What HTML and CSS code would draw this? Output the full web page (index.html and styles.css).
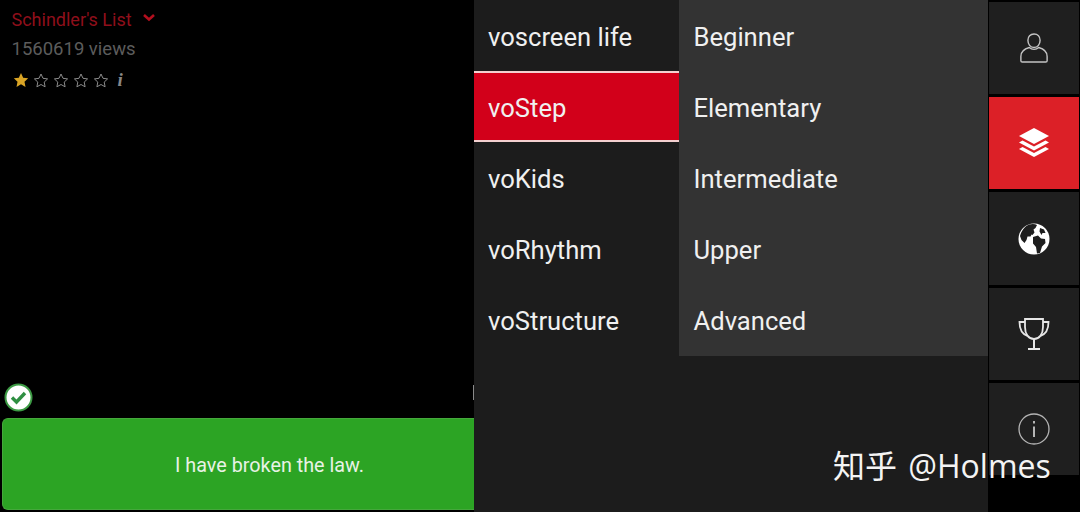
FILE: index.html
```html
<!DOCTYPE html>
<html lang="en">
<head>
<meta charset="UTF-8">
<meta name="viewport" content="width=device-width, initial-scale=1.0">
<title>voscreen</title>
<link rel="stylesheet" href="styles.css">
</head>
<body>

<div class="screen">

  <div class="player">
    <div class="info">
      <div class="movie">
        <span class="movie-title">Schindler's List</span>
        <svg class="chevron" width="14" height="9" viewBox="0 0 14 9"><path d="M2 2l5 4.5L12 2" fill="none" stroke="#b30f1e" stroke-width="2.6"/></svg>
      </div>
      <div class="views">1560619 views</div>
      <div class="stars">
        <svg class="star" viewBox="0 0 16 16"><path d="M8 1l2.2 4.7 5 .6-3.700 3.500 1 5.100L8 12.300l-4.500 2.600 1-5.100L.8 6.300l5-.6z" fill="#d9a425"/></svg>
        <svg class="star" viewBox="0 0 16 16"><path d="M8 2l2 4.300 4.600.6-3.400 3.200.9 4.700L8 12.500l-4.100 2.300.9-4.700L1.400 6.900 6 6.300z" fill="none" stroke="#8c8c8c"/></svg>
        <svg class="star" viewBox="0 0 16 16"><path d="M8 2l2 4.300 4.600.6-3.400 3.200.9 4.700L8 12.500l-4.100 2.300.9-4.700L1.400 6.900 6 6.300z" fill="none" stroke="#8c8c8c"/></svg>
        <svg class="star" viewBox="0 0 16 16"><path d="M8 2l2 4.300 4.600.6-3.400 3.200.9 4.700L8 12.500l-4.100 2.300.9-4.700L1.400 6.900 6 6.300z" fill="none" stroke="#8c8c8c"/></svg>
        <svg class="star" viewBox="0 0 16 16"><path d="M8 2l2 4.300 4.600.6-3.400 3.200.9 4.700L8 12.500l-4.100 2.300.9-4.700L1.400 6.900 6 6.300z" fill="none" stroke="#8c8c8c"/></svg>
        <span class="info-i">i</span>
      </div>
    </div>

    <div class="answer-area">
      <svg class="check" width="29" height="29" viewBox="0 0 29 29">
        <circle cx="14.500" cy="14.500" r="13" fill="#fff" stroke="#3c9a44" stroke-width="2"/>
        <path d="M8 14.500l4.500 4.500 8.500-9" fill="none" stroke="#2f8f42" stroke-width="3.400"/>
      </svg>
      <div class="answer">I have broken the law.</div>
    </div>
    <div class="scroll-tick"></div>
  </div>

  <div class="menu-panel">
    <ul class="menu">
      <li class="menu-item">voscreen life</li>
      <li class="menu-item active">voStep</li>
      <li class="menu-item">voKids</li>
      <li class="menu-item">voRhythm</li>
      <li class="menu-item">voStructure</li>
    </ul>
    <ul class="submenu">
      <li class="menu-item">Beginner</li>
      <li class="menu-item">Elementary</li>
      <li class="menu-item">Intermediate</li>
      <li class="menu-item">Upper</li>
      <li class="menu-item">Advanced</li>
    </ul>
  </div>

  <div class="rail">
    <div class="rail-btn">
      <svg width="30" height="32" viewBox="0 0 32 34" fill="none" stroke="#c4c4c4" stroke-width="1.500">
        <path d="M16 2c4 0 6.500 2.800 6.500 6.800S20 16.500 16 16.500 9.500 12.800 9.500 8.800 12 2 16 2z"/>
        <path d="M11 16.500C5.500 18 2 21 2 26v4.500c0 1 .5 1.500 1.500 1.500h25c1 0 1.500-.5 1.500-1.500V26c0-5-3.500-8-9-9.500-1.300 1.300-3 2-5 2s-3.700-.7-5-2z"/>
      </svg>
    </div>
    <div class="rail-btn selected">
      <svg width="32" height="32" viewBox="0 0 32 32" fill="#fff">
        <path d="M16 1l15 8-15 8-15-8z"/>
        <path d="M4.500 13.500L16 19.600l11.500-6.100 3.500 2-15 8-15-8z"/>
        <path d="M4.500 20L16 26.100 27.500 20l3.500 2-15 8-15-8z"/>
      </svg>
    </div>
    <div class="rail-btn">
      <svg width="32" height="32" viewBox="0 0 32 32">
        <circle cx="16" cy="16" r="15.500" fill="#fff"/>
        <path d="M11 1.500c3-.8 6-.8 8 .5l-1.500 3-2 1.500 1 3-2 2.500-1-.5-1 2-3 0-1 3.500-2 3-3-3-1.500-4C3 9 6 3.500 11 1.500z" fill="#1e1e1e"/>
        <path d="M15 14l5-1.500 3 3 4 .5.500 4-3.500 3.500-2 6.500-3 .5-1-6.500-3-3.500z" fill="#1e1e1e"/>
        <path d="M22 5l4 1.500 1.500 3.500-3 0-1 2-2-3.500z" fill="#1e1e1e"/>
      </svg>
    </div>
    <div class="rail-btn">
      <svg width="32" height="34" viewBox="0 0 32 34" fill="none" stroke="#e6e6e6" stroke-width="1.800">
        <path d="M7 2h18v8c0 7-3.500 12-9 12S7 17 7 10z"/>
        <path d="M7 5H1.500c0 7 2.500 12 8 14M25 5h5.500c0 7-2.500 12-8 14"/>
        <path d="M16 22v9M10 32h12" stroke-width="2"/>
      </svg>
    </div>
    <div class="rail-btn">
      <svg width="32" height="32" viewBox="0 0 32 32" fill="none" stroke="#b5b5b5">
        <circle cx="16" cy="16" r="15" stroke-width="1.300"/>
        <path d="M16 13.500V24" stroke-width="2"/>
        <path d="M16 8v2.500" stroke-width="2"/>
      </svg>
    </div>
  </div>

  <div class="watermark">知乎 @Holmes</div>
</div>

</body>
</html>
```

FILE: styles.css
```css
* {
  box-sizing: border-box;
}

body {
  margin: 0;
  background-color: #000;
  font-family: Roboto, Arial, sans-serif;
}

ul {
  list-style: none;
  margin: 0;
  padding: 0;
}

.screen {
  position: relative;
  display: flex;
  width: 1080px;
  height: 512px;
  overflow: hidden;
}

/* left side */
.player {
  position: relative;
  width: 474px;
  display: flex;
  flex-direction: column;
  justify-content: space-between;
  background-color: #000;
}

.info {
  padding: 8px 0 0 11.500px;
}

.movie {
  display: flex;
  align-items: center;
  gap: 10px;
  height: 22px;
}

.movie-title {
  font-size: 18px;
  color: #8f0f1b;
}

.chevron {
  margin-bottom: 3px;
}

.views {
  margin-top: 9px;
  font-size: 18.500px;
  line-height: 20px;
  color: #5c5c5c;
}

.stars {
  display: flex;
  align-items: center;
  gap: 4px;
  margin-top: 13px;
  margin-left: 1px;
}

.star {
  width: 16px;
  height: 16px;
}

.info-i {
  margin-left: 5px;
  font-family: "Liberation Serif", serif;
  font-size: 19px;
  line-height: 16px;
  font-style: italic;
  font-weight: bold;
  color: #888;
}

.answer-area {
  padding: 0 0 2px 2px;
}

.check {
  display: block;
  margin: 0 0 6px 2px;
}

.answer {
  display: flex;
  align-items: center;
  justify-content: center;
  height: 92px;
  padding-left: 62px;
  padding-top: 2px;
  border: 1px solid #45a83c;
  border-right: none;
  border-radius: 6px 0 0 6px;
  background-color: #2ca424;
  color: #e8f2e6;
  font-size: 19.800px;
}

.scroll-tick {
  position: absolute;
  right: 0;
  top: 385px;
  width: 1px;
  height: 15px;
  background-color: #8a8a8a;
}

/* middle menus */
.menu-panel {
  width: 514px;
  display: flex;
  align-items: flex-start;
  background-color: #1c1c1c;
}

.menu {
  width: 205px;
}

.submenu {
  width: 309px;
  background-color: #333;
  height: 356px;
}

.menu-item {
  display: flex;
  align-items: center;
  height: 71px;
  padding-left: 14px;
  padding-top: 3px;
  font-size: 25.600px;
  color: #f0f0f0;
}

.submenu .menu-item {
  padding-left: 14.500px;
}

.menu-item.active {
  background-color: #d2001a;
  border-top: 2px solid #f4d0d0;
  border-bottom: 2px solid #f4d0d0;
}

/* right rail */
.rail {
  width: 92px;
  height: 475px;
  display: flex;
  flex-direction: column;
  gap: 3px;
  padding: 2px 1px 0 1px;
  background-color: #000;
}

.rail-btn {
  flex: 1;
  display: flex;
  align-items: center;
  justify-content: center;
  padding-right: 1px;
  background-color: #1f1f1f;
}

.rail-btn.selected {
  background-color: #dc2027;
}

.watermark {
  position: absolute;
  left: 833px;
  top: 446px;
  font-family: "Open Sans", "Noto Sans CJK SC", sans-serif;
  font-size: 32px;
  word-spacing: 3px;
  line-height: 40px;
  color: #f4f4f4;
  white-space: nowrap;
}
```
